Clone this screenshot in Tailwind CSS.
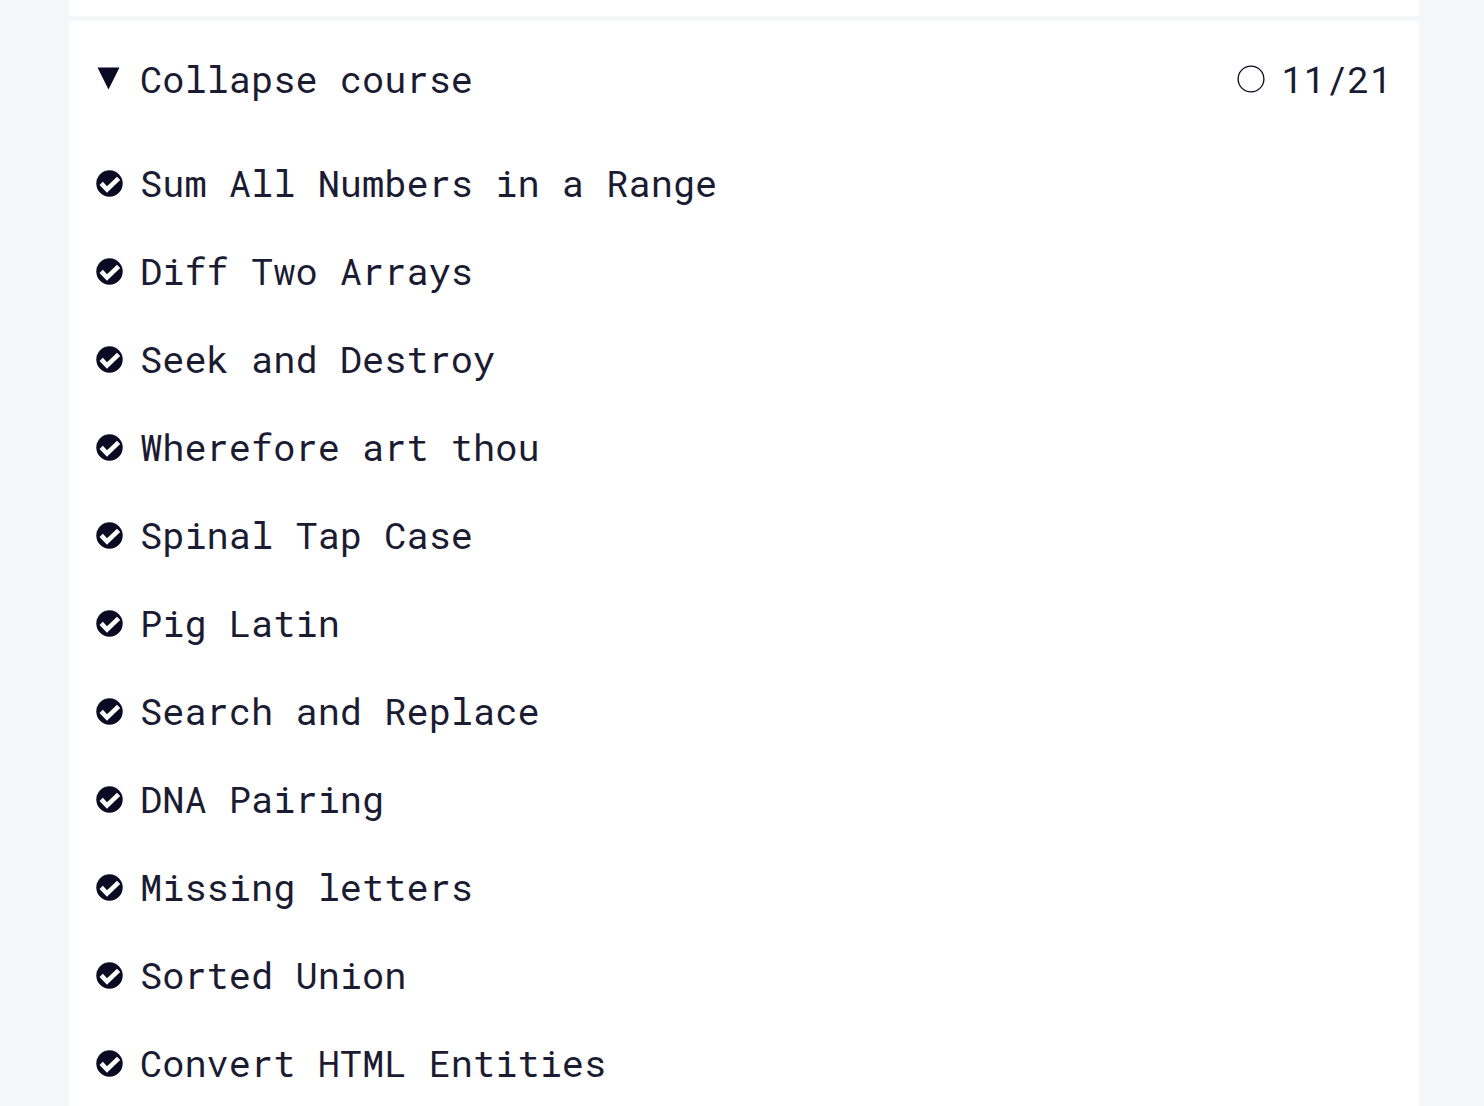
<!DOCTYPE html>
<html lang="en">
<head>
<meta charset="utf-8">
<meta name="viewport" content="width=device-width, initial-scale=1">
<title>Course challenges</title>
<script src="https://cdn.jsdelivr.net/npm/@tailwindcss/browser@4"></script>
</head>
<body class="bg-[#f5f6f7] text-[#1b1b32] font-['Roboto_Mono','Liberation_Mono',monospace] text-[37px] leading-[48px]">
<svg class="hidden" aria-hidden="true">
  <symbol id="done" viewBox="0 0 27 27">
    <circle cx="13.5" cy="13.5" r="13.2" fill="#0a0a23"/>
    <path d="M5.2 13.4 L11 19.5 L22.6 8.4" fill="none" stroke="#fff" stroke-width="4.6"/>
  </symbol>
</svg>
<main class="ml-[69px] mr-[65px] flex h-screen flex-col gap-[5px] overflow-hidden">
  <div class="h-4 shrink-0 bg-white"></div>
  <section class="grow bg-white pt-[34px]">
    <button type="button" aria-expanded="true" class="flex w-full items-center justify-between pl-7 pr-[27px]">
      <span class="flex items-center gap-5">
        <svg class="h-6 w-[23px]" viewBox="0 0 23 24" aria-hidden="true"><path d="M0.5 0.5H22.5L11.5 22.5Z" fill="#0a0a23"/></svg>
        <span>Collapse course</span>
      </span>
      <span class="flex items-center gap-4">
        <svg class="size-7" viewBox="0 0 28 28" aria-hidden="true"><circle cx="14" cy="14" r="12.9" fill="none" stroke="#0a0a23" stroke-width="1.3"/></svg>
        <span>11/21</span>
      </span>
    </button>
    <ul class="pt-9">
      <li><a href="#sum-all" class="flex h-[88px] items-center gap-[17px] pl-[27px]"><svg class="size-[27px]" aria-hidden="true"><use href="#done"/></svg><span>Sum All Numbers in a Range</span></a></li>
      <li><a href="#diff" class="flex h-[88px] items-center gap-[17px] pl-[27px]"><svg class="size-[27px]" aria-hidden="true"><use href="#done"/></svg><span>Diff Two Arrays</span></a></li>
      <li><a href="#seek" class="flex h-[88px] items-center gap-[17px] pl-[27px]"><svg class="size-[27px]" aria-hidden="true"><use href="#done"/></svg><span>Seek and Destroy</span></a></li>
      <li><a href="#wherefore" class="flex h-[88px] items-center gap-[17px] pl-[27px]"><svg class="size-[27px]" aria-hidden="true"><use href="#done"/></svg><span>Wherefore art thou</span></a></li>
      <li><a href="#spinal" class="flex h-[88px] items-center gap-[17px] pl-[27px]"><svg class="size-[27px]" aria-hidden="true"><use href="#done"/></svg><span>Spinal Tap Case</span></a></li>
      <li><a href="#pig-latin" class="flex h-[88px] items-center gap-[17px] pl-[27px]"><svg class="size-[27px]" aria-hidden="true"><use href="#done"/></svg><span>Pig Latin</span></a></li>
      <li><a href="#search" class="flex h-[88px] items-center gap-[17px] pl-[27px]"><svg class="size-[27px]" aria-hidden="true"><use href="#done"/></svg><span>Search and Replace</span></a></li>
      <li><a href="#dna" class="flex h-[88px] items-center gap-[17px] pl-[27px]"><svg class="size-[27px]" aria-hidden="true"><use href="#done"/></svg><span>DNA Pairing</span></a></li>
      <li><a href="#missing" class="flex h-[88px] items-center gap-[17px] pl-[27px]"><svg class="size-[27px]" aria-hidden="true"><use href="#done"/></svg><span>Missing letters</span></a></li>
      <li><a href="#sorted" class="flex h-[88px] items-center gap-[17px] pl-[27px]"><svg class="size-[27px]" aria-hidden="true"><use href="#done"/></svg><span>Sorted Union</span></a></li>
      <li><a href="#entities" class="flex h-[88px] items-center gap-[17px] pl-[27px]"><svg class="size-[27px]" aria-hidden="true"><use href="#done"/></svg><span>Convert HTML Entities</span></a></li>
    </ul>
  </section>
</main>
</body>
</html>
